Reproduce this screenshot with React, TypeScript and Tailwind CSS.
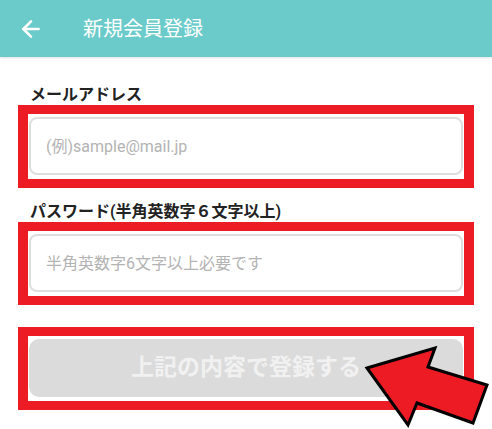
import { ArrowLeft } from "lucide-react";

const FONT = "font-['Roboto','Noto_Sans_CJK_JP',sans-serif]";

function Outline({ children }: { children: React.ReactNode }) {
  // red annotation frame around each control
  return (
    <div className="border-x-[10px] border-y-[9px] border-[#ed1c24] px-px pt-[3px] pb-[4px]">
      {children}
    </div>
  );
}

export default function App() {
  return (
    <div className={`relative h-[429px] w-full overflow-hidden bg-white ${FONT}`}>
      <header className="flex h-[57px] items-center bg-[#6bcbca] shadow-[0_1px_2px_rgba(0,0,0,0.12)]">
        <ArrowLeft size={26} strokeWidth={2.4} className="ml-[18px] text-white" />
        <h1 className="ml-[39px] text-[20px] leading-none text-white">新規会員登録</h1>
      </header>

      <main className="flex flex-col px-[18px]">
        <label className="mt-[28px] h-5 pl-3 text-[16px] font-semibold leading-5 text-[#222]">メールアドレス</label>
        <Outline>
          <input
            placeholder="(例)sample@mail.jp"
            className="h-[58px] w-full rounded-[8px] border-2 border-[#dedede] px-[15px] text-[16px] outline-none placeholder:text-[#b3b3b3]"
          />
        </Outline>

        <label className="mt-[14px] h-5 pl-3 text-[16px] font-semibold leading-5 text-[#222]">
          パスワード(半角英数字６文字以上)
        </label>
        <Outline>
          <input
            type="password"
            placeholder="半角英数字6文字以上必要です"
            className="h-[58px] w-full rounded-[8px] border-2 border-[#dedede] px-[15px] text-[16px] outline-none placeholder:text-[#b3b3b3]"
          />
        </Outline>

        <div className="mt-[22px]">
          <Outline>
            <button
              disabled
              className="flex h-[58px] w-full items-center justify-center rounded-[10px] bg-[#dbdbdb] text-[23px] font-bold text-[#f1f1f1]"
            >
              上記の内容で登録する
            </button>
          </Outline>
        </div>
      </main>

      <svg className="pointer-events-none absolute left-0 top-0" width="492" height="429" viewBox="0 0 492 429">
        <polygon
          points="367,368 435,348 428,367 487,385 473,423 417,403 408,425"
          fill="#ed1c24"
          stroke="#000"
          strokeWidth="3"
          strokeLinejoin="miter"
        />
      </svg>
    </div>
  );
}
